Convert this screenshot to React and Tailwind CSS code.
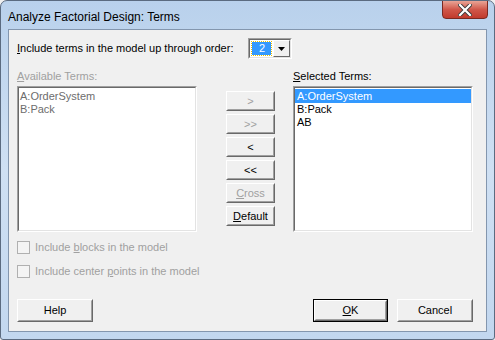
import React from "react";

const font = { fontFamily: '"Liberation Sans", Arial, sans-serif' };

// classic 3D sunken frame (list boxes, combo)
function Sunken({ className = "", children }) {
  return (
    <div className={`border border-t-[#a0a0a0] border-l-[#a0a0a0] border-b-white border-r-white ${className}`}>
      <div className="h-full border border-t-[#696969] border-l-[#696969] border-b-[#e3e3e3] border-r-[#e3e3e3] bg-white">
        {children}
      </div>
    </div>
  );
}

// classic raised push button
function Btn({ children, disabled, isDefault, className = "" }) {
  const inner = (
    <div className="h-full border border-t-white border-l-white border-b-[#696969] border-r-[#696969]">
      <div className={`h-full flex items-center justify-center border border-t-[#f0f0f0] border-l-[#f0f0f0] border-b-[#a0a0a0] border-r-[#a0a0a0] bg-[#f0f0f0] text-[11px] ${disabled ? "text-[#a0a0a0]" : "text-black"}`}>
        {children}
      </div>
    </div>
  );
  if (isDefault) return <div className={`border border-black ${className}`}>{inner}</div>;
  return <div className={className}>{inner}</div>;
}

function Check({ children }) {
  return (
    <div className="flex items-center h-[13px]">
      <div className="w-[13px] h-[13px] border border-[#b0b0b0] bg-[#f4f4f4]" />
      <span className="ml-[5px] text-[11px] text-[#a0a0a0] leading-[13px]">{children}</span>
    </div>
  );
}

export default function App() {
  return (
    <div style={font} className="w-[495px] h-[340px] bg-[#f0f0f0]">
      <div className="w-[495px] h-[340px] flex flex-col rounded-t-[7px] rounded-b-[3px] border border-[#5b6b80] bg-gradient-to-b from-[#b9d1ec] via-[#cfe0f3] to-[#c2d7ef] overflow-hidden">
        {/* Title bar */}
        <div className="h-[28px] flex items-start shrink-0">
          <div className="pl-[7px] pt-[9px] text-[12px] leading-[14px] text-black">Analyze Factorial Design: Terms</div>
          <div className="flex-1" />
          <div className="mr-[6px] w-[46px] h-[19px] -mt-px rounded-b-[4px] border border-[#7a2a22] bg-gradient-to-b from-[#e8a496] via-[#d0574a] to-[#c13a2d] flex items-center justify-center">
            <svg width="14" height="12" viewBox="0 0 14 12">
              <path d="M2 1 L12 11 M12 1 L2 11" stroke="#3b3b3b" strokeWidth="4" strokeLinecap="square" />
              <path d="M2 1 L12 11 M12 1 L2 11" stroke="#ffffff" strokeWidth="2.2" strokeLinecap="square" />
            </svg>
          </div>
        </div>

        {/* Client area */}
        <div className="mx-[7px] mb-[7px] flex-1 border border-[#8396ae] bg-[#f0f0f0] flex flex-col pl-[8px] pt-[8px]">
          <div className="flex items-center h-[21px]">
            <span className="text-[11px] text-black"><u>I</u>nclude terms in the model up through order:</span>
            <div className="ml-[15px] w-[44px] h-[21px]">
              <Sunken className="h-full">
                <div className="flex h-full bg-white">
                  <div className="m-[2px] w-[19px] bg-[#3399ff] outline-1 outline-dotted outline-[#e8c000] flex items-center justify-center text-white text-[11px]">2</div>
                  <div className="w-[17px] h-full border border-t-white border-l-white border-b-[#696969] border-r-[#696969] bg-[#f0f0f0] flex items-center justify-center">
                    <svg width="7" height="4" viewBox="0 0 7 4"><path d="M0 0 H7 L3.5 4 Z" fill="#000" /></svg>
                  </div>
                </div>
              </Sunken>
            </div>
          </div>

          <div className="flex mt-[11px]">
            <div className="w-[180px]">
              <div className="text-[11px] leading-[13px] text-[#a0a0a0]"><u>A</u>vailable Terms:</div>
              <Sunken className="mt-[3px] h-[146px]">
                <div className="pl-px pt-[2px] text-[11px] leading-[13px] text-[#6d6d6d]">
                  <div>A:OrderSystem</div>
                  <div>B:Pack</div>
                </div>
              </Sunken>
            </div>

            <div className="ml-[29px] mt-[21px] w-[49px] flex flex-col gap-[3px]">
              <Btn disabled className="h-[20px]">&gt;</Btn>
              <Btn disabled className="h-[20px]">&gt;&gt;</Btn>
              <Btn className="h-[20px]">&lt;</Btn>
              <Btn className="h-[20px]">&lt;&lt;</Btn>
              <Btn disabled className="h-[20px]"><u>C</u>ross</Btn>
              <Btn className="h-[20px]"><u>D</u>efault</Btn>
            </div>

            <div className="ml-[18px] w-[180px]">
              <div className="text-[11px] leading-[13px] text-black"><u>S</u>elected Terms:</div>
              <Sunken className="mt-[3px] h-[146px]">
                <div className="pt-px text-[11px] leading-[13px] text-black">
                  <div className="bg-[#3399ff] text-white pl-[2px] h-[14px] leading-[14px]">A:OrderSystem</div>
                  <div className="pl-[2px]">B:Pack</div>
                  <div className="pl-[2px]">AB</div>
                </div>
              </Sunken>
            </div>
          </div>

          <div className="mt-[9px] flex flex-col gap-[11px]">
            <Check>Include <u>b</u>locks in the model</Check>
            <Check>Include center <u>p</u>oints in the model</Check>
          </div>

          <div className="mt-[21px] flex items-center pr-[13px]">
            <Btn className="w-[76px] h-[23px]">Help</Btn>
            <div className="flex-1" />
            <Btn isDefault className="w-[75px] h-[23px]"><u>O</u>K</Btn>
            <Btn className="ml-[9px] w-[76px] h-[23px]">Cancel</Btn>
          </div>
        </div>
      </div>
    </div>
  );
}
